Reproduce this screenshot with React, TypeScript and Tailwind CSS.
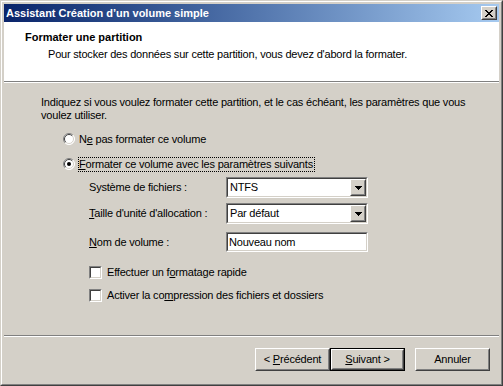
import React from "react";

// Classic Windows dialog: "Assistant Création d'un volume simple"

function Sunken({ className = "", children }: { className?: string; children?: React.ReactNode }) {
  return (
    <div className={`border border-t-[#808080] border-l-[#808080] border-b-white border-r-white ${className}`}>
      <div className="flex h-full items-center border border-t-[#404040] border-l-[#404040] border-b-[#D4D0C8] border-r-[#D4D0C8] bg-white">
        {children}
      </div>
    </div>
  );
}

function Raised({ className = "", children }: { className?: string; children?: React.ReactNode }) {
  return (
    <div className={`border border-t-white border-l-white border-b-[#404040] border-r-[#404040] bg-[#D4D0C8] ${className}`}>
      <div className="flex h-full items-center justify-center border border-t-[#D4D0C8] border-l-[#D4D0C8] border-b-[#808080] border-r-[#808080]">
        {children}
      </div>
    </div>
  );
}

function CloseGlyph() {
  const rows = ["xx....xx", ".xx..xx.", "..xxxx..", "...xx...", "..xxxx..", ".xx..xx.", "xx....xx"];
  return (
    <svg width="8" height="7" viewBox="0 0 8 7" shapeRendering="crispEdges">
      {rows.flatMap((r, y) =>
        r.split("").map((c, x) => (c === "x" ? <rect key={`${x}-${y}`} x={x} y={y} width="1" height="1" fill="#000" /> : null))
      )}
    </svg>
  );
}

function Radio({ checked }: { checked?: boolean }) {
  return (
    <svg width="12" height="12" viewBox="0 0 12 12" className="shrink-0">
      <circle cx="6" cy="6" r="5.5" fill="#fff" />
      <path d="M2.1 9.9A5.5 5.5 0 0 1 9.9 2.1" fill="none" stroke="#808080" />
      <path d="M9.9 2.1A5.5 5.5 0 0 1 2.1 9.9" fill="none" stroke="#fff" />
      <path d="M2.8 9.2A4.5 4.5 0 0 1 9.2 2.8" fill="none" stroke="#404040" />
      <path d="M9.2 2.8A4.5 4.5 0 0 1 2.8 9.2" fill="none" stroke="#D4D0C8" />
      {checked && <circle cx="6" cy="6" r="2" fill="#000" />}
    </svg>
  );
}

function Combo({ value }: { value: string }) {
  return (
    <Sunken className="h-[21px] w-[142px]">
      <span className="flex-1 pl-[2px]">{value}</span>
      <Raised className="h-full w-[16px]">
        <svg width="7" height="4" viewBox="0 0 7 4" shapeRendering="crispEdges">
          <rect x="0" y="0" width="7" height="1" fill="#000" />
          <rect x="1" y="1" width="5" height="1" fill="#000" />
          <rect x="2" y="2" width="3" height="1" fill="#000" />
          <rect x="3" y="3" width="1" height="1" fill="#000" />
        </svg>
      </Raised>
    </Sunken>
  );
}

function Check({ children }: { children: React.ReactNode }) {
  return (
    <div className="flex h-[13px] items-center gap-[5px] pl-[85px]">
      <Sunken className="h-[13px] w-[13px] shrink-0" />
      <span>{children}</span>
    </div>
  );
}

function Button({ children, isDefault }: { children: React.ReactNode; isDefault?: boolean }) {
  if (isDefault) {
    return (
      <div className="h-[23px] w-[75px] border border-black">
        <Raised className="h-full w-full">{children}</Raised>
      </div>
    );
  }
  return <Raised className="h-[23px] w-[75px]">{children}</Raised>;
}

export default function App() {
  return (
    <div className="h-[386px] w-[503px] bg-[#D4D0C8] font-['Liberation_Sans',Arial,sans-serif] text-[11px] leading-[13px] tracking-[-0.2px] text-black">
      <div className="h-full border border-t-[#D4D0C8] border-l-[#D4D0C8] border-b-[#404040] border-r-[#404040]">
        <div className="flex h-full flex-col border border-t-white border-l-white border-b-[#808080] border-r-[#808080] p-[2px]">
          {/* title bar */}
          <div className="flex h-[18px] shrink-0 items-center justify-between bg-gradient-to-r from-[#0A246A] to-[#A6CAF0] pl-[2px] pr-[2px]">
            <span className="font-bold tracking-normal text-white">Assistant Création d’un volume simple</span>
            <Raised className="h-[14px] w-[16px]">
              <CloseGlyph />
            </Raised>
          </div>

          {/* header */}
          <div className="h-[59px] shrink-0 bg-white pl-[21px] pt-[9px]">
            <div className="font-bold tracking-normal">Formater une partition</div>
            <div className="mt-[4px] pl-[23px]">
              Pour stocker des données sur cette partition, vous devez d'abord la formater.
            </div>
          </div>
          <div className="h-[1px] shrink-0 bg-[#808080]" />
          <div className="h-[1px] shrink-0 bg-white" />

          {/* body */}
          <div className="h-[252px] shrink-0 pt-[13px]">
            <p className="pl-[37px]">
              Indiquez si vous voulez formater cette partition, et le cas échéant, les paramètres que vous
              <br />
              voulez utiliser.
            </p>

            <div className="mt-[9px] flex h-[16px] items-center gap-[3px] pl-[59px]">
              <Radio />
              <span className="border border-transparent">
                N<u className="underline-offset-[1px]">e</u> pas formater ce volume
              </span>
            </div>
            <div className="mt-[9px] flex h-[16px] items-center gap-[3px] pl-[59px]">
              <Radio checked />
              <span className="border border-dotted border-black pr-[1px]">
                <u className="underline-offset-[1px]">F</u>ormater ce volume avec les paramètres suivants
              </span>
            </div>

            <div className="mt-[5px] flex items-center pl-[85px]">
              <span className="w-[137px]">Système de fichiers :</span>
              <Combo value="NTFS" />
            </div>
            <div className="mt-[5px] flex items-center pl-[85px]">
              <span className="w-[137px]">
                <u className="underline-offset-[1px]">T</u>aille d'unité d'allocation :
              </span>
              <Combo value="Par défaut" />
            </div>
            <div className="mt-[8px] flex items-center pl-[85px]">
              <span className="w-[137px]">
                <u className="underline-offset-[1px]">N</u>om de volume :
              </span>
              <Sunken className="h-[20px] w-[142px]">
                <span className="pl-[1px]">Nouveau nom</span>
              </Sunken>
            </div>

            <div className="mt-[14px]">
              <Check>
                Effectuer un f<u className="underline-offset-[1px]">o</u>rmatage rapide
              </Check>
            </div>
            <div className="mt-[10px]">
              <Check>
                Activer la co<u className="underline-offset-[1px]">m</u>pression des fichiers et dossiers
              </Check>
            </div>
          </div>

          <div className="h-[1px] shrink-0 bg-[#808080]" />
          <div className="h-[1px] shrink-0 bg-white" />

          {/* buttons */}
          <div className="flex flex-1 items-start justify-end pr-[9px] pt-[11px]">
            <Button>
              <span>
                &lt; <u className="underline-offset-[1px]">P</u>récédent
              </span>
            </Button>
            <Button isDefault>
              <span>
                <u className="underline-offset-[1px]">S</u>uivant &gt;
              </span>
            </Button>
            <div className="ml-[10px]">
              <Button>Annuler</Button>
            </div>
          </div>
        </div>
      </div>
    </div>
  );
}
